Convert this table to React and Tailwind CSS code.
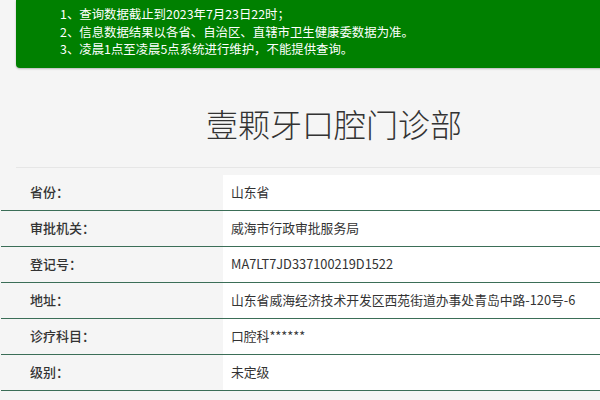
import React from 'react';

const notices = [
  '1、查询数据截止到2023年7月23日22时；',
  '2、信息数据结果以各省、自治区、直辖市卫生健康委数据为准。',
  '3、凌晨1点至凌晨5点系统进行维护，不能提供查询。',
];

const rows = [
  ['省份：', '山东省'],
  ['审批机关：', '威海市行政审批服务局'],
  ['登记号：', 'MA7LT7JD337100219D1522'],
  ['地址：', '山东省威海经济技术开发区西苑街道办事处青岛中路-120号-6'],
  ['诊疗科目：', '口腔科******'],
  ['级别：', '未定级'],
];

export default function App() {
  return (
    <div
      className="w-[600px] h-[400px] overflow-hidden bg-[#f5f5f5] text-[#333]"
      style={{ fontFamily: '"Noto Sans CJK SC", "Noto Sans", sans-serif' }}
    >
      <div className="w-[668px]">
        {/* notice box */}
        <div className="ml-[16px] w-[640px] bg-[#008000] rounded-b-[4px] shadow-[0_1px_2px_rgba(0,0,0,0.25)] pt-[6px] pb-[9px] pl-[44px]">
          {notices.map((n) => (
            <p key={n} className="text-white text-[12.4px] leading-[17.5px]">{n}</p>
          ))}
        </div>

        <h1 className="mt-[35px] text-center text-[32px] leading-[40px] font-light text-[#333]">
          壹颗牙口腔门诊部
        </h1>

        <div className="mt-[24px] ml-[16px] border-t border-[#e6e6e6]" />

        <div className="mt-[7px] ml-[1px]">
          {rows.map(([label, value]) => (
            <div key={label} className="flex h-[36px] border-b border-[#3b6e57]">
              <div className="w-[222px] pl-[29px] flex items-center text-[13px] font-medium text-[#333]">
                {label}
              </div>
              <div className="flex-1 bg-white pl-[8px] flex items-center text-[12.8px] text-[#333]">
                {value}
              </div>
            </div>
          ))}
        </div>
      </div>
    </div>
  );
}
